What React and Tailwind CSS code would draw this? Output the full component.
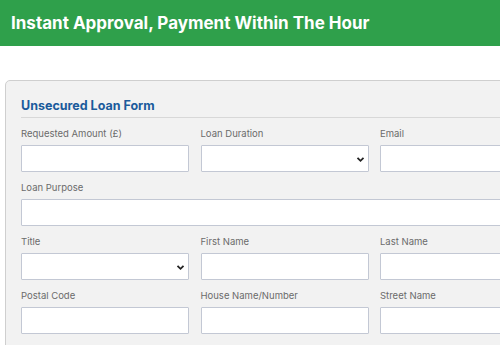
import React from "react";

function Field({ label, select, span }) {
  return (
    <div className={span ? "col-span-3 flex flex-col" : "flex flex-col"}>
      <label className="text-[9.5px] leading-[14px] text-[#6b6b6b] h-[14px] mb-[4px]">{label}</label>
      <div className="relative h-[27px] bg-white border border-[#c3c8d4] rounded-[1px]">
        {select && (
          <svg className="absolute right-[3px] top-[10px]" width="9" height="7" viewBox="0 0 9 7">
            <path d="M1.5 1.8 L4.5 4.8 L7.5 1.8" fill="none" stroke="#222" strokeWidth="1.8" />
          </svg>
        )}
      </div>
    </div>
  );
}

export default function App() {
  return (
    <div className="w-[500px] h-[345px] overflow-hidden bg-white" style={{ fontFamily: "Inter, 'Open Sans', sans-serif" }}>
      <div className="h-[46px] bg-[#2fa04b] flex items-center pl-[11px]">
        <h1 className="text-white font-bold text-[17px] leading-none">Instant Approval, Payment Within The Hour</h1>
      </div>
      <div className="mt-[34px] ml-[5px] w-[620px] border border-[#cfcfcf] rounded-[5px] bg-[#f2f2f2] pl-[15px] pt-[16px] pb-[20px]">
        <h2 className="text-[12.5px] font-bold text-[#1b5b9c] leading-[18px]">Unsecured Loan Form</h2>
        <div className="border-b border-[#d8d8d8] mt-[2px] mb-[9px]"></div>
        <div className="grid grid-cols-[168px_168px_168px] gap-x-[11.5px] gap-y-[9px]">
          <Field label="Requested Amount (£)" />
          <Field label="Loan Duration" select />
          <Field label="Email" />
          <Field label="Loan Purpose" span />
          <Field label="Title" select />
          <Field label="First Name" />
          <Field label="Last Name" />
          <Field label="Postal Code" />
          <Field label="House Name/Number" />
          <Field label="Street Name" />
        </div>
      </div>
    </div>
  );
}
